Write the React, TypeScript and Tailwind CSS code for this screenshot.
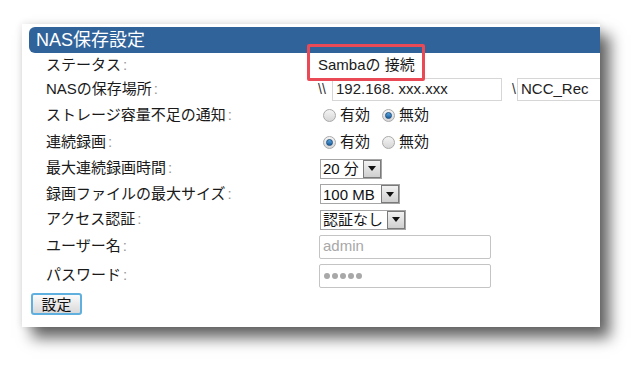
import React from 'react';

const font = { fontFamily: '"Liberation Sans", "Noto Sans CJK JP", sans-serif' };

const Radio: React.FC<{ checked?: boolean }> = ({ checked }) => (
  <span className="inline-flex items-center justify-center w-[13px] h-[13px] rounded-full border border-[#a9a9a9] bg-gradient-to-b from-[#f4f4f4] to-[#d6d6d6]">
    {checked && <span className="w-[7px] h-[7px] rounded-full bg-gradient-to-b from-[#5aa6e0] to-[#1b5f9e] border border-[#1c4f80]" />}
  </span>
);

const Select: React.FC<{ value: string; width: string }> = ({ value, width }) => (
  <div className={`flex items-stretch h-[20px] ${width} border border-[#a5a5a5] bg-white`}>
    <span className="flex-1 flex items-center pl-[2px] text-[15px] text-[#111] leading-none whitespace-nowrap">{value}</span>
    <span className="w-[18px] shrink-0 flex items-center justify-center border border-[#7a7a7a] bg-gradient-to-b from-[#f2f2f2] to-[#cfcfcf]">
      <svg width="8" height="5" viewBox="0 0 8 5"><path d="M0 0h8L4 5z" fill="#111" /></svg>
    </span>
  </div>
);

const Row: React.FC<{ label: string; h: string; children?: React.ReactNode }> = ({ label, h, children }) => (
  <div className={`flex items-center ${h}`}>
    <div className="w-[296px] shrink-0 pl-[24px] text-[15px] text-[#1a1a1a] whitespace-nowrap">
      {label}<span className="text-[#999] ml-[2px]">:</span>
    </div>
    <div className="flex items-center">{children}</div>
  </div>
);

export default function App() {
  return (
    <div className="w-[642px] h-[371px] bg-white overflow-hidden" style={font}>
      <div className="ml-[22px] mt-[24px] w-[578px] bg-white pt-[3px] pb-[12px] overflow-hidden shadow-[10px_11px_14px_rgba(0,0,0,0.6),0_0_8px_rgba(0,0,0,0.12)]">
        <div className="ml-[7px] h-[26px] rounded-l-[6px] bg-[#31639b] flex items-center pl-[7px] text-white text-[18px] leading-none">
          NAS保存設定
        </div>
        <div>
          <Row label="ステータス" h="h-[24px]">
            <span className="relative text-[15px] text-[#1a1a1a] whitespace-nowrap">
              Sambaの 接続
              <span className="absolute left-[-11px] top-[-10px] w-[118px] h-[37px] border-[3px] border-[#ea4a55] rounded-[2px]" />
            </span>
          </Row>
          <Row label="NASの保存場所" h="h-[25px]">
            <span className="text-[14px] text-[#333] w-[14px] shrink-0">\\</span>
            <div className="w-[170px] shrink-0 h-[23px] border border-[#d6d6d6] flex items-center pl-[3px] text-[15px] text-[#222] whitespace-nowrap">
              192.168. xxx.xxx
            </div>
            <span className="text-[14px] text-[#333] ml-[10px] w-[5px] shrink-0">\</span>
            <div className="w-[120px] shrink-0 h-[23px] border border-[#d6d6d6] flex items-center pl-[3px] text-[15px] text-[#222] whitespace-nowrap">
              NCC_Rec
            </div>
          </Row>
          <Row label="ストレージ容量不足の通知" h="h-[27px]">
            <span className="ml-[5px] flex items-center gap-[4px] text-[15px] text-[#1a1a1a]">
              <Radio />有効
              <span className="ml-[4px]" />
              <Radio checked />無効
            </span>
          </Row>
          <Row label="連続録画" h="h-[27px]">
            <span className="ml-[5px] flex items-center gap-[4px] text-[15px] text-[#1a1a1a]">
              <Radio checked />有効
              <span className="ml-[4px]" />
              <Radio />無効
            </span>
          </Row>
          <Row label="最大連続録画時間" h="h-[25px]">
            <div className="ml-[2px]"><Select value="20 分" width="w-[62px]" /></div>
          </Row>
          <Row label="録画ファイルの最大サイズ" h="h-[26px]">
            <div className="ml-[2px]"><Select value="100 MB" width="w-[80px]" /></div>
          </Row>
          <Row label="アクセス認証" h="h-[25px]">
            <div className="ml-[2px]"><Select value="認証なし" width="w-[86px]" /></div>
          </Row>
          <Row label="ユーザー名" h="h-[29px]">
            <div className="ml-[1px] w-[172px] h-[24px] border border-[#c4c4c4] rounded-[2px] flex items-center pl-[3px] text-[15px] text-[#a8a8a8]">
              admin
            </div>
          </Row>
          <Row label="パスワード" h="h-[29px]">
            <div className="ml-[1px] w-[172px] h-[24px] border border-[#c4c4c4] rounded-[2px] flex items-center pl-[4px] gap-[2px]">
              {[0, 1, 2, 3, 4].map(i => (
                <span key={i} className="w-[6px] h-[6px] rounded-full bg-[#a8a8a8]" />
              ))}
            </div>
          </Row>
        </div>
        <div className="mt-[3px] ml-[9px]">
          <button className="w-[51px] h-[22px] rounded-[3px] border-2 border-[#5fb0de] bg-gradient-to-b from-[#fbfbfb] to-[#d9d9d9] text-[15px] text-[#111] leading-none flex items-center justify-center">
            設定
          </button>
        </div>
      </div>
    </div>
  );
}
